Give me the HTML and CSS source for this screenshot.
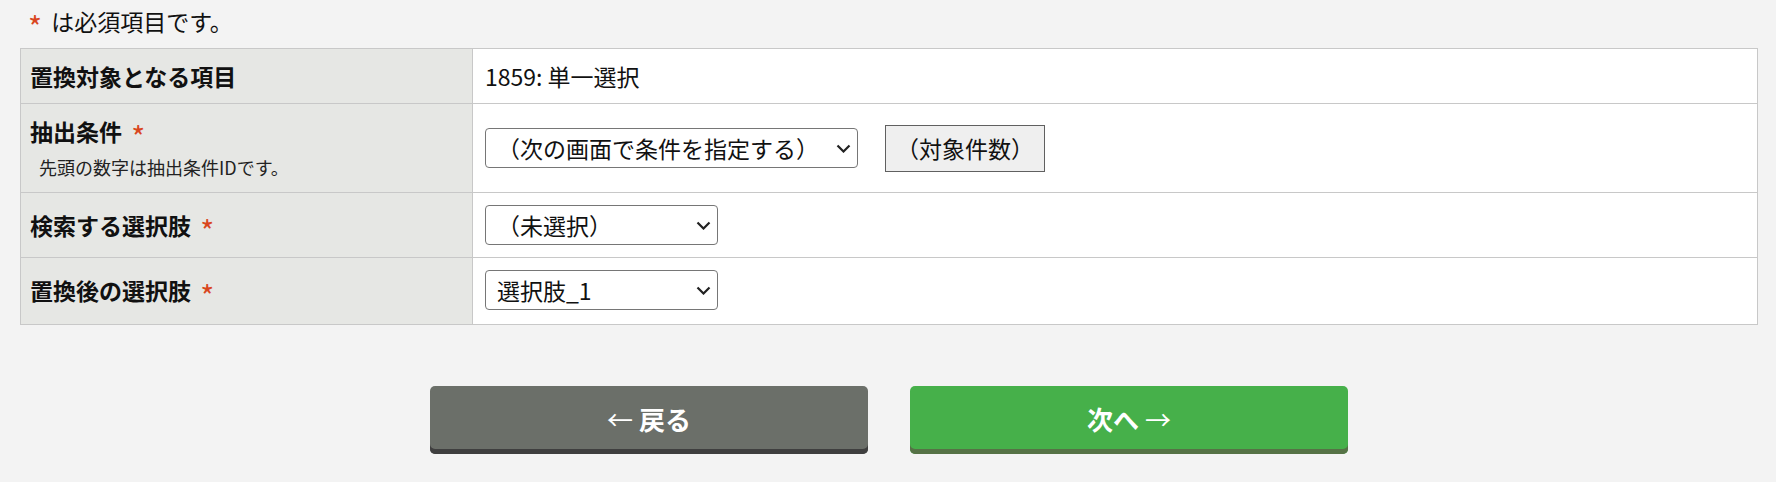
FILE: index.html
```html
<!DOCTYPE html>
<html lang="ja">
<head>
    <meta charset="UTF-8">
    <meta name="viewport" content="width=device-width, initial-scale=1.0">
    <title>選択肢の一括置換</title>
    <link rel="stylesheet" href="styles.css">
</head>
<body>
    <div class="page">
        <p class="required-note"><span class="req">*</span> は必須項目です。</p>

        <!-- 置換の設定 -->
        <table class="form-table">
            <colgroup>
                <col class="col-label">
                <col>
            </colgroup>
            <tr>
                <th>置換対象となる項目</th>
                <td>1859: 単一選択</td>
            </tr>
            <tr>
                <th>
                    抽出条件 <span class="req">*</span>
                    <p class="hint">先頭の数字は抽出条件IDです。</p>
                </th>
                <td>
                    <div class="field-row">
                        <select class="select select-wide">
                            <option>（次の画面で条件を指定する）</option>
                        </select>
                        <button class="count-button" type="button">（対象件数）</button>
                    </div>
                </td>
            </tr>
            <tr>
                <th>検索する選択肢 <span class="req">*</span></th>
                <td>
                    <select class="select">
                        <option>（未選択）</option>
                        <option>選択肢_1</option>
                    </select>
                </td>
            </tr>
            <tr class="last-row">
                <th>置換後の選択肢 <span class="req">*</span></th>
                <td>
                    <select class="select">
                        <option>選択肢_1</option>
                    </select>
                </td>
            </tr>
        </table>

        <div class="actions">
            <button class="btn btn-back" type="button"><span class="arrow">←</span> 戻る</button>
            <button class="btn btn-next" type="button">次へ <span class="arrow">→</span></button>
        </div>
    </div>
</body>
</html>
```

FILE: styles.css
```css
body {
    margin: 0;
    padding: 0;
    background: #f3f3f3;
    color: #111;
    font-family: "Noto Sans CJK JP", "Noto Sans", sans-serif;
    font-size: 23px;
}
.page {
    padding: 0 18px 0 20px;
}
.required-note {
    margin: 0;
    padding: 6px 0 12px 8px;
    line-height: 30px;
}
.req {
    display: inline-block;
    margin-left: 4px;
    color: #d9461e;
    font-size: 30px;
    font-weight: normal;
    line-height: 20px;
    vertical-align: -8px;
}
.required-note .req {
    margin-left: 0;
    margin-right: 4px;
}
.form-table {
    width: 100%;
    border-collapse: collapse;
    table-layout: fixed;
    border: 1px solid #c8c8c8;
}
.col-label {
    width: 452px;
}
.form-table th,
.form-table td {
    border: 1px solid #c8c8c8;
    padding: 12px 12px;
    line-height: 30px;
    vertical-align: middle;
    text-align: left;
}
.form-table th {
    background: #e6e7e4;
    font-weight: bold;
    padding-left: 9px;
}
.form-table td {
    background: #fff;
}
.form-table .last-row th,
.form-table .last-row td {
    padding-bottom: 14px;
}
.hint {
    margin: 8px 0 0;
    padding-left: 9px;
    font-size: 18px;
    font-weight: normal;
    line-height: 26px;
    color: #222;
}
.field-row {
    display: flex;
    align-items: center;
    gap: 27px;
}
.select {
    display: block;
    width: 233px;
    height: 40px;
    padding: 0 30px 0 11px;
    border: 1px solid #767676;
    border-radius: 4px;
    background: #fff url("data:image/svg+xml,%3Csvg xmlns='http://www.w3.org/2000/svg' width='15' height='9' viewBox='0 0 15 9'%3E%3Cpath d='M1.5 1.5 L7.5 7.5 L13.5 1.5' fill='none' stroke='%23222' stroke-width='2.2'/%3E%3C/svg%3E") no-repeat right 6px center;
    font-family: inherit;
    font-size: 23px;
    color: #111;
    -webkit-appearance: none;
    appearance: none;
}
.select-wide {
    width: 373px;
}
.count-button {
    height: 47px;
    padding: 0 10px;
    background: #efefef;
    border: 1px solid #606060;
    border-radius: 0;
    font-family: inherit;
    font-size: 23px;
    color: #111;
}
.actions {
    display: flex;
    justify-content: center;
    gap: 42px;
    margin-top: 61px;
}
.btn {
    width: 438px;
    height: 68px;
    padding: 0 0 3px;
    border: none;
    border-radius: 5px;
    color: #fff;
    font-family: inherit;
    font-size: 26px;
    font-weight: bold;
    cursor: pointer;
}
.btn .arrow {
    font-weight: normal;
}
.btn-back {
    background: #6b6f69;
    box-shadow: inset 0 -5px 0 #3f3f3f;
}
.btn-next {
    background: #46b04a;
    box-shadow: inset 0 -5px 0 #567246;
}
```
